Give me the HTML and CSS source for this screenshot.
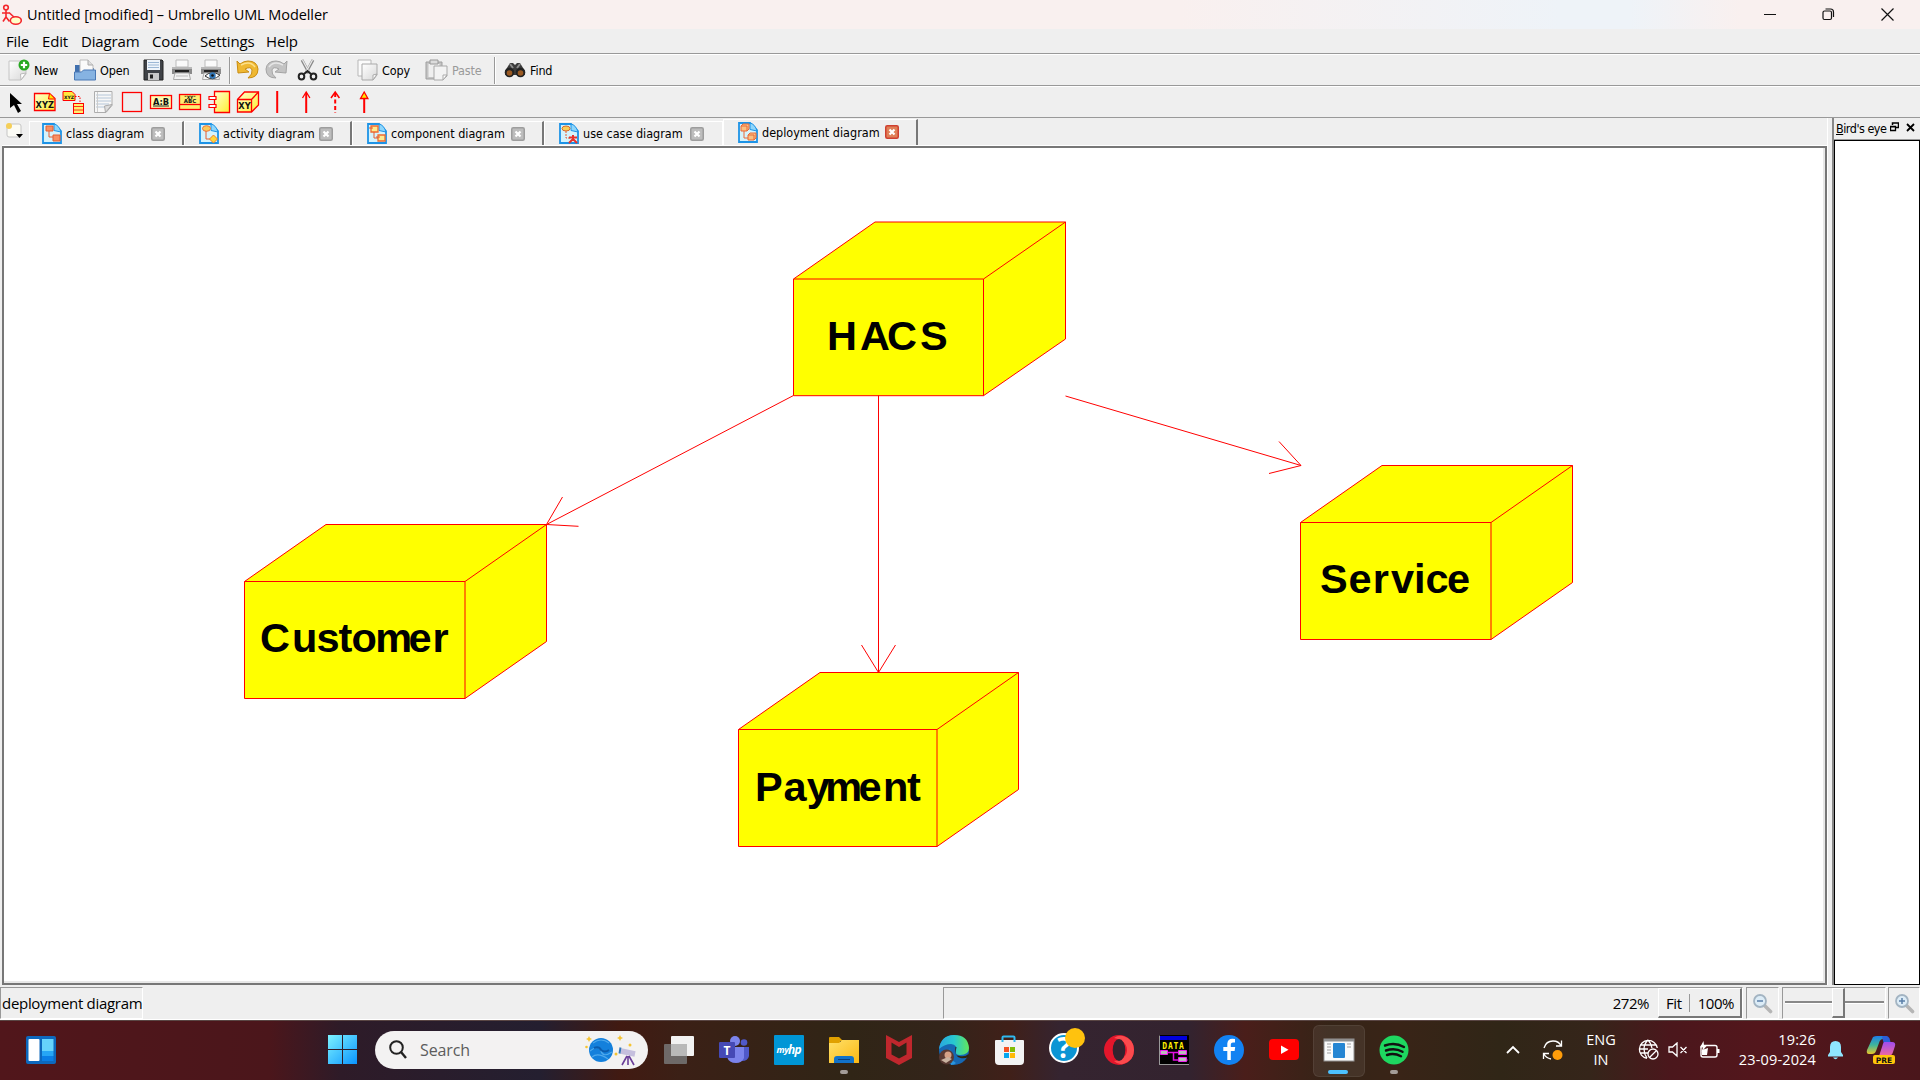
FILE: index.html
```
<!DOCTYPE html>
<html lang="en">
<head>
<meta charset="utf-8">
<title>Umbrello UML Modeller</title>
<link rel="stylesheet" href="styles.css">
</head>
<body>
<svg width="0" height="0" class="defs">
  <defs>
    <linearGradient id="paper" x1="0" y1="0" x2="1" y2="1"><stop offset="0" stop-color="#fff"/><stop offset="1" stop-color="#d8d8d8"/></linearGradient>
    <linearGradient id="yel" x1="0" y1="0" x2="1" y2="1"><stop offset="0" stop-color="#ffffd0"/><stop offset="1" stop-color="#ffee30"/></linearGradient>
    <linearGradient id="win" x1="0" y1="0" x2="1" y2="1"><stop offset="0" stop-color="#7df3ff"/><stop offset="1" stop-color="#0a94ff"/></linearGradient>
    <linearGradient id="fold" x1="0" y1="0" x2="1" y2="1"><stop offset="0" stop-color="#ffe069"/><stop offset="1" stop-color="#fbb813"/></linearGradient>
    <linearGradient id="edge" x1="0" y1="0" x2="1" y2="0"><stop offset="0" stop-color="#2aa6e0"/><stop offset=".5" stop-color="#28c8d0"/><stop offset="1" stop-color="#62e85a"/></linearGradient>
    <linearGradient id="cop" x1="0" y1="0" x2="0" y2="1"><stop offset="0" stop-color="#1e7fe8"/><stop offset=".5" stop-color="#3fb59a"/><stop offset="1" stop-color="#e8c62a"/></linearGradient>
    <linearGradient id="cop2" x1="0" y1="0" x2="0" y2="1"><stop offset="0" stop-color="#a04cf0"/><stop offset="1" stop-color="#f06a9c"/></linearGradient>
    <symbol id="doc" viewBox="0 0 20 21"><path d="M1 1h11l7 7v12H1z" fill="#d5f3fc" stroke="#1d93e6" stroke-width="1.800"/><path d="M12 1q5 1 7 8l-7-1.500z" fill="#8fd6fb" stroke="#1d93e6" stroke-width="1"/></symbol>
    <symbol id="close" viewBox="0 0 14 14"><rect x=".75" y=".75" width="12.500" height="12.500" rx="1.500" fill="#bdbdbd" stroke="#9d9d9d" stroke-width="1.500"/><path d="M4.500 4.500l5 5M9.500 4.500l-5 5" stroke="#fff" stroke-width="2.200"/></symbol>
    <symbol id="closered" viewBox="0 0 14 14"><rect x=".75" y=".75" width="12.500" height="12.500" rx="1.500" fill="#e08058" stroke="#cf4030" stroke-width="1.500"/><path d="M4.500 4.500l5 5M9.500 4.500l-5 5" stroke="#fff" stroke-width="2.200"/></symbol>
    <symbol id="printer" viewBox="0 0 22 22"><path d="M5 1h12v7H5z" fill="#fafafa" stroke="#bbb"/><path d="M1 8h20v7H1z" fill="#8b8b8b"/><path d="M1 8h20v2H1z" fill="#b8b8b8"/><path d="M4 11h14v2.500H4z" fill="#222"/><path d="M4 14h14l1.500 6.500h-17z" fill="#f2f2f2" stroke="#aaa"/><path d="M5 17h12" stroke="#bbb"/></symbol>
    <symbol id="glass" viewBox="0 0 21 21"><path d="M12 12l6.500 6.500" stroke="#b5b5b5" stroke-width="3.600" stroke-linecap="round"/><circle cx="8" cy="8" r="6" fill="#dcecf7" stroke="#a3b4c2" stroke-width="1.800"/></symbol>
  </defs>
</svg>

<div class="screen">
  <header class="titlebar">
    <svg class="appicon" width="20" height="21" viewBox="0 0 20 21" fill="none" stroke="#f4262c" stroke-width="1.600"><circle cx="4" cy="3.500" r="2.300"/><path d="M4 6v7M0 9h8M4 13l-3 4.500M4 13l3.500 4.500M7 8.500l6 5.500"/><ellipse cx="13.800" cy="16.500" rx="5.500" ry="3.700" fill="#ffffc8"/></svg>
    <span class="title">Untitled [modified] – Umbrello UML Modeller</span>
    <div class="winbtns">
      <svg width="12" height="12"><path d="M0 6.500h12" stroke="#111"/></svg>
      <svg width="13" height="13" fill="none" stroke="#111" stroke-width="1.200"><rect x="1" y="3" width="8.500" height="8.500" rx="1.500"/><path d="M3.500 1h5q3 0 3 3v5"/></svg>
      <svg width="13" height="13"><path d="M.5.5l12 12M12.500.5l-12 12" stroke="#111" stroke-width="1.200"/></svg>
    </div>
  </header>

  <nav class="menubar"><span class="m1">File</span><span class="m2">Edit</span><span class="m3">Diagram</span><span class="m4">Code</span><span class="m5">Settings</span><span class="m6">Help</span></nav>

  <div class="toolbar main-tools">
    <div class="tool t-new"><svg width="22" height="22"><path d="M1 2h17v13l-5 6H1z" fill="url(#paper)" stroke="#c4c4c4"/><path d="M18 14l-5 7-.5-6z" fill="#fff" stroke="#bbb"/><circle cx="16" cy="6" r="5.500" fill="#27a821"/><path d="M16 2.800v6.400M12.800 6h6.400" stroke="#fff" stroke-width="2.200"/></svg><span>New</span></div>
    <div class="tool t-open"><svg width="22" height="22"><path d="M1 6h8l2 3h9v11H1z" fill="#3f6fae"/><path d="M6 1h8l5 5v9H6z" fill="#fafafa" stroke="#bbb"/><path d="M14 1v5h5" fill="#ddd" stroke="#aaa"/><path d="M.5 21V13h7l2-2h12v10z" fill="#86b3e2" stroke="#4a79b5"/></svg><span>Open</span></div>
    <div class="tool t-save"><svg width="21" height="22"><path d="M1 1h18l1 1v19H1z" fill="#3f4247" stroke="#222"/><path d="M4 1h13v10H4z" fill="#eef4fb"/><path d="M5 3.500h11M5 6h11M5 8.500h11" stroke="#9bb7d6"/><path d="M5 14h11v7H5z" fill="#c9c9c9"/><path d="M7 15.500h3v4H7z" fill="#222"/></svg></div>
    <div class="tool t-print"><svg width="22" height="22"><use href="#printer"/></svg></div>
    <div class="tool t-preview"><svg width="22" height="22"><use href="#printer"/><path d="M5 17q6-6 15-1q-7 7-15 1z" fill="#fff" stroke="#333"/><circle cx="12.500" cy="16.500" r="3.200" fill="#3278b8"/><circle cx="12.500" cy="16.500" r="1.300" fill="#111"/></svg></div>
    <i class="sep"></i>
    <div class="tool t-undo"><svg width="23" height="20"><path d="M1 1l1 12 11-1-4-3q6-3 7 1 1 4-4 8 10 0 10-9-1-8-10-8-4 0-8 3z" fill="#efb832" stroke="#c98d12"/><path d="M5 5q9-5 14 2" fill="none" stroke="#fde08a" stroke-width="1.500"/></svg></div>
    <div class="tool t-redo"><svg width="23" height="20"><path d="M22 1l-1 12-11-1 4-3q-6-3-7 1-1 4 4 8-10 0-10-9 1-8 10-8 4 0 8 3z" fill="#c3c3c3" stroke="#a4a4a4"/><path d="M18 5q-9-5-14 2" fill="none" stroke="#e6e6e6" stroke-width="1.500"/></svg></div>
    <div class="tool t-cut"><svg width="21" height="22"><path d="M5 1l7 13M16 1L9 14" stroke="#888" stroke-width="2.800"/><path d="M5.500 1l6.500 12M15.500 1l-6.500 12" stroke="#e8e8e8" stroke-width="1.300"/><path d="M7 15l3.500-3 3.500 3" fill="none" stroke="#222" stroke-width="2"/><ellipse cx="4.500" cy="17.500" rx="2.800" ry="3" fill="none" stroke="#222" stroke-width="2"/><ellipse cx="16.500" cy="17.500" rx="2.800" ry="3" fill="none" stroke="#222" stroke-width="2"/></svg><span>Cut</span></div>
    <div class="tool t-copy"><svg width="21" height="22"><path d="M1 1h13v16H1z" fill="#fbfbfb" stroke="#b7b7b7"/><path d="M5 5h15v11l-4 5H5z" fill="url(#paper)" stroke="#a9a9a9"/><path d="M20 15l-4 6v-5z" fill="#fff" stroke="#aaa"/></svg><span>Copy</span></div>
    <div class="tool t-paste off"><svg width="23" height="22"><path d="M1 3h16v17H1z" fill="#c4c4c4" stroke="#9f9f9f"/><path d="M3.500 5h11v13h-11z" fill="#efefef"/><path d="M5 1h8v4H5z" fill="#ddd" stroke="#999"/><path d="M9 7h13v10l-4 4H9z" fill="#f3f3f3" stroke="#a9a9a9"/><path d="M22 16l-4 5v-5z" fill="#fff" stroke="#aaa"/></svg><span>Paste</span></div>
    <i class="sep"></i>
    <div class="tool t-find"><svg width="22" height="16"><path d="M1 9l5-8h3l2 2 2-2h3l5 8v4H1z" fill="#3c3c3c"/><path d="M6 2l3 4M16 2l-3 4" stroke="#8c8c8c" stroke-width="2"/><circle cx="5.500" cy="10.500" r="4.800" fill="#222"/><circle cx="16.500" cy="10.500" r="4.800" fill="#222"/><circle cx="5.500" cy="11" r="2.800" fill="#9b5a22"/><circle cx="16.500" cy="11" r="2.800" fill="#9b5a22"/></svg><span>Find</span></div>
  </div>

  <div class="toolbar work-tools">
    <svg width="29" height="24"><path d="M9 3v15l4-3 4 8 3-2-4-7h5z" fill="#000"/></svg>
    <svg width="29" height="24"><path d="M4.500 3.500h15l5.500 5v12h-20.500z" fill="url(#yel)" stroke="#f00" stroke-width="1.300"/><path d="M19.500 3.500l-1 5.500h6" fill="#ffe600" stroke="#f00"/><text x="14.800" y="18" class="ico b8">XYZ</text></svg>
    <svg width="29" height="24"><path d="M4 1.500h9l3 3v6H4z" fill="#ffe83c" stroke="#f00"/><text x="10" y="9" class="ico b5">XYZ</text><path d="M16 6.500h5v7" fill="none" stroke="#f00" stroke-dasharray="1.500 1.500"/><rect x="14.500" y="13.500" width="10" height="10" fill="#ffef70" stroke="#f00"/><path d="M14 16.500h11M15 20h9" stroke="#f00" stroke-width=".8"/></svg>
    <svg width="29" height="24"><path d="M6.500 1.500h17.500v14l-6 7H6.500z" fill="#f7f7f7" stroke="#adadad"/><path d="M8 5h15M8 8h15M8 11h15M8 14h13M8 17h10" stroke="#b5c6d8"/><path d="M9.500 2v20" stroke="#ccc"/><path d="M24 14.500l-6.500 8-1-6.500z" fill="#ddd" stroke="#aaa"/></svg>
    <svg width="29" height="24"><rect x="5.500" y="2.500" width="19" height="19" fill="none" stroke="#f00" stroke-width="1.300"/></svg>
    <svg width="29" height="24"><rect x="4.500" y="5.500" width="21" height="13" fill="#fffbb0" stroke="#f00" stroke-width="1.300"/><text x="15" y="14.500" class="ico b8">A:B</text><path d="M7 16h16" stroke="#222"/></svg>
    <svg width="29" height="24"><rect x="4.500" y="4.500" width="21" height="15" fill="#ffee70" stroke="#f00" stroke-width="1.300"/><path d="M4 14.500h22" stroke="#f00" stroke-width="1.300"/><text x="15" y="8.500" class="ico b5">"XY"</text><text x="15" y="13.200" class="ico b6">ABC</text></svg>
    <svg width="29" height="24"><path d="M10.500 1.500h15v21h-15z" fill="url(#yel)" stroke="#f00" stroke-width="1.300"/><path d="M5 6.500h7v3h-7zM5 14.500h7v3h-7z" fill="#fff" stroke="#f00" stroke-width="1.200"/></svg>
    <svg width="29" height="24"><path d="M4.500 9.500l7-7.500h14v13l-7 7h-14z" fill="url(#yel)" stroke="#f00" stroke-width="1.300"/><path d="M4.500 9.500h14v12.500M18.500 9.500l7-7.500" fill="none" stroke="#f00" stroke-width="1.300"/><text x="11.500" y="19" class="ico b8">XY</text></svg>
    <svg width="29" height="24"><path d="M15.200 1v22" stroke="#f00" stroke-width="2"/></svg>
    <svg width="29" height="24" fill="none" stroke="#f00"><path d="M15.200 3v20" stroke-width="2"/><path d="M11.500 8l3.700-6 3.700 6" stroke-width="1.300"/></svg>
    <svg width="29" height="24" fill="none" stroke="#f00"><path d="M15.200 3v20" stroke-width="2" stroke-dasharray="4 2.500"/><path d="M11 8l4.200-6 4.200 6" stroke-width="1.500"/></svg>
    <svg width="29" height="24" stroke="#f00"><path d="M15.200 8v15" stroke-width="2"/><path d="M11.500 8.500l3.700-6.500 3.700 6.500z" fill="#ffe800" stroke-width="1.300"/></svg>
  </div>

  <main class="work">
    <section class="pane">
      <div class="tabs">
        <svg class="corner" width="20" height="20"><rect x="2" y="2" width="14" height="13" rx="2" fill="#fbfbf5" stroke="#c5c5c5"/><circle cx="4" cy="4" r="3" fill="#f5cf58"/><path d="M11 12h7l-3.500 4z" fill="#000"/></svg>
        <div class="tab tab-class"><svg width="20" height="21"><use href="#doc"/><path d="M4 3h7v5H4zM11 12h7v6h-7z" fill="#f79064" stroke="#e55c30"/><path d="M7 8v6h4" fill="none" stroke="#e55c30"/></svg><span>class diagram</span><svg width="14" height="14"><use href="#close"/></svg></div>
        <div class="tab tab-act"><svg width="20" height="21"><use href="#doc"/><ellipse cx="7.500" cy="5.500" rx="4" ry="2.800" fill="#f9c95a" stroke="#ef7438"/><path d="M7 8v8h4" fill="none" stroke="#e55c30"/><path d="M14.500 12l4 4-4 4-4-4z" fill="#ffd738" stroke="#f07e28"/></svg><span>activity diagram</span><svg width="14" height="14"><use href="#close"/></svg></div>
        <div class="tab tab-comp"><svg width="20" height="21"><use href="#doc"/><path d="M4 3h7v6H4zM11 12h7v6h-7z" fill="#fdeb90" stroke="#f06a30" stroke-width="1.300"/><path d="M2 5h4M9 14h4M7 9v6h4" fill="none" stroke="#e55c30"/></svg><span>component diagram</span><svg width="14" height="14"><use href="#close"/></svg></div>
        <div class="tab tab-use"><svg width="20" height="21"><use href="#doc"/><ellipse cx="7" cy="5.500" rx="4" ry="2.500" fill="#f8cf58" stroke="#d96a2c"/><path d="M7 8v7h4" fill="none" stroke="#e55c30" stroke-dasharray="2 1"/><path d="M14 12v4M10 14.500h8M14 16l-4 4M14 16l4 4" stroke="#e8322c" stroke-width="2"/></svg><span>use case diagram</span><svg width="14" height="14"><use href="#close"/></svg></div>
        <div class="tab tab-dep active"><svg width="20" height="21"><use href="#doc"/><path d="M3 4l2-2h6v5l-2 2H3zM10 13l2-2h6v5l-2 2h-6z" fill="#fbc080" stroke="#ea6838"/><path d="M6 9v7h4M3 4h6v5M10 13h6v5" fill="none" stroke="#ea6838"/></svg><span>deployment diagram</span><svg width="14" height="14"><use href="#closered"/></svg></div>
      </div>
      <div class="canvas">
        <svg class="diagram" width="1819" height="833" viewBox="4 148 1819 833">
          <g class="node">
            <path d="M793.500 279L875 222h190.500v117L983.500 395.700h-190z"/><path d="M793.500 279h190v116.700M983.500 279l82-57"/>
            <path d="M244.500 581.500l81.500-57h220.500v117L465 698.500H244.500z"/><path d="M244.500 581.500H465v117M465 581.500l81.500-57"/>
            <path d="M738.500 729.500l81.500-57h198.500v117L937 846.500H738.500z"/><path d="M738.500 729.500H937v117M937 729.500l81.500-57"/>
            <path d="M1300.500 522.500l81.500-57h190.500v117L1491 639.500h-190.500z"/><path d="M1300.500 522.500H1491v117M1491 522.500l81.500-57"/>
          </g>
          <g class="link">
            <path d="M793.500 395.500L546.500 524.500M562.500 497l-16 27.500 32 1.800"/>
            <path d="M878.500 395.500v277M861.500 645l17 27.500 17-27.500"/>
            <path d="M1065.500 396l235.500 69.500M1279 441.500l22 24-32 8"/>
          </g>
          <g class="label">
            <text y="350" x="827 860 887 920">HACS</text>
            <text y="652" x="260 292 316.500 338.500 351.500 375.300 408.600 432.500">Customer</text>
            <text y="801" x="755 783.500 806.700 825.300 858.500 883 907">Payment</text>
            <text y="593" x="1320 1348.500 1372.800 1391 1414 1425.500 1447">Service</text>
          </g>
        </svg>
      </div>
    </section>
    <aside class="dock">
      <div class="dock-head"><span class="dock-title"><u>B</u>ird's eye</span>
        <svg width="9" height="10" fill="none" stroke="#000"><path d="M2.500 3V1h6v4.500H6" stroke-width="1.500"/><path d="M.5 4.500h5v4h-5zM0 4.800h6" stroke-width="1.300"/></svg>
        <svg width="9" height="9"><path d="M1 1l7 7M8 1l-7 7" stroke="#000" stroke-width="1.800"/></svg></div>
      <div class="bird"></div>
    </aside>
  </main>

  <footer class="status">
    <div class="st-name">deployment diagram</div>
    <div class="st-zoom"><span class="pct">272%</span><div class="fitbox"><span class="fit">Fit</span><i></i><span>100%</span></div></div>
    <div class="cell out"><svg width="21" height="21"><use href="#glass"/><path d="M5 8h6" stroke="#5b7fa8" stroke-width="1.500"/></svg></div>
    <div class="cell slider"><div class="groove"></div><div class="knob"></div></div>
    <div class="cell in"><svg width="21" height="21"><use href="#glass"/><path d="M5 8h6M8 5v6" stroke="#5b7fa8" stroke-width="1.500"/></svg></div>
  </footer>

  <div class="taskbar">
    <svg class="widgets" width="30" height="28"><rect width="30" height="28" rx="2" fill="#0d68bd"/><rect x="2.500" y="3" width="11" height="22" rx="1" fill="#fff"/><rect x="16" y="3" width="11.500" height="12" fill="#66d3fb"/><rect x="16" y="15" width="11.500" height="5" fill="#26a6f5"/><rect x="16" y="20" width="11.500" height="5" fill="#0a7ee5"/></svg>
    <svg class="start" width="29" height="29"><path d="M0 0h14v14H0zM15 0h14v14H15zM0 15h14v14H0zM15 15h14v14H15z" fill="url(#win)"/></svg>
    <div class="search">
      <svg width="18" height="20" fill="none" stroke="#222" stroke-width="2"><circle cx="7.500" cy="7.500" r="6.300"/><path d="M12 12l5 6" stroke-width="2.400"/></svg>
      <span>Search</span>
      <svg class="space" width="54" height="32"><path d="M5 2l1 2 2 1-2 1-1 2-1-2-2-1 2-1zM36 1l1 2 2 1-2 1-1 2-1-2-2-1 2-1z" fill="#f5c431"/><circle cx="2.500" cy="13" r="1.300" fill="#f5c431"/><circle cx="46" cy="11" r="1.500" fill="#f5c431"/><circle cx="32" cy="20" r="1.500" fill="#f5c431"/><circle cx="17" cy="16" r="12" fill="#1480dc"/><path d="M9 9q8-6 16 0M6 17q9-7 11 0t11 1M8 23q6-5 16 2" fill="none" stroke="#4fa9ec" stroke-width="1.200"/><path d="M10 14q5-2 7 2 4 3 8 0" fill="none" stroke="#0b5cae" stroke-width="2"/><path d="M37 17l14 3" stroke="#c5bfdd" stroke-width="5.500"/><path d="M36.500 13.500l-1 6" stroke="#3275b8" stroke-width="2"/><path d="M44 22v9M43 22l-5 9M45 22l5 9" stroke="#6b3f99" stroke-width="1.600"/></svg>
    </div>
    <div class="apps">
      <div class="app"><svg width="32" height="32"><rect x="8" y="2" width="23" height="20" rx="1" fill="#f2f2f2"/><rect x="1" y="10" width="23" height="20" rx="1" fill="#777" opacity=".85"/><path d="M8 10h16v12H8z" fill="#b9b9b9"/></svg></div>
      <div class="app"><svg width="32" height="32"><circle cx="17" cy="7" r="5" fill="#7b83eb"/><circle cx="26" cy="8.500" r="3.300" fill="#5059c9"/><path d="M20 13h11v9q-1 5-7 5z" fill="#5059c9"/><path d="M9 13h17v11q-2 5-8 5-7 0-9-6z" fill="#7b83eb"/><rect x="1" y="8" width="16" height="16" rx="1" fill="#4549b5"/><text x="9" y="20.500" class="logo" font-size="12">T</text></svg></div>
      <div class="app"><svg width="32" height="32"><rect x="1" y="1" width="30" height="30" rx="1" fill="#0096d6"/><text x="9.500" y="19" class="logo it my">my</text><text x="21.500" y="20" class="logo it hp">hp</text></svg></div>
      <div class="app"><svg width="32" height="32"><path d="M1 4q0-1 1-1h9l4 4h-3v5H1z" fill="#e0a000"/><path d="M1 9h10l3-3h17v23H1z" fill="url(#fold)"/><path d="M6 29v-4q0-3 3-3h14q3 0 3 3v4z" fill="#1272c8"/><path d="M10 25.500h12" stroke="#0b3f7c"/></svg><b class="dot"></b></div>
      <div class="app"><svg width="32" height="32"><path d="M3 1l13 7 13-7v23l-13 7-13-7z" fill="#c0272d"/><path d="M8.500 8.500v12l7.500 4 7.500-4V8.500L16 13z" fill="#2f2417"/></svg></div>
      <div class="app"><svg width="32" height="32"><circle cx="16" cy="16" r="15" fill="#1668b4"/><path d="M1 15Q3 1 16 1q14 0 15 13 0 7-9 7-5 0-4-4 2-6-5-7-6 0-12 5z" fill="url(#edge)"/><path d="M12 14q-3 10 6 15-2 2-5 2z" fill="#2a95dc"/><circle cx="8.500" cy="23" r="7.500" fill="#5a3a33"/><circle cx="10" cy="21" r="3.500" fill="#d5a187"/><path d="M3 26l5 3 6-4-4-2z" fill="#c9b2a0"/><path d="M18.500 13q-3 9 3 9 6 1 9-2v3q-4 2-8 1-7-2-5-11z" fill="#30240e"/></svg></div>
      <div class="app"><svg width="32" height="32"><path d="M9.500 9V3.500q0-1 1-1h10q1 0 1 1V9" fill="none" stroke="#2fb9f0" stroke-width="2"/><path d="M2 7q0-1 1-1h27q1 0 1 1v20q0 4-4 4H6q-4 0-4-4z" fill="#f3f3f3"/><path d="M9.500 8V6M21.500 8V6" stroke="#2fb9f0" stroke-width="2"/><path d="M11 13h5v5h-5z" fill="#f35325"/><path d="M17 13h5v5h-5z" fill="#81bc06"/><path d="M11 19h5v5h-5z" fill="#05a6f0"/><path d="M17 19h5v5h-5z" fill="#ffba08"/></svg></div>
      <div class="app"><svg width="40" height="40" class="help"><circle cx="18" cy="20" r="14" fill="#0c95d4" stroke="#fff" stroke-width="2"/><text x="18" y="30" class="logo" font-size="28">?</text><circle cx="29" cy="10" r="10" fill="#ffc20e"/></svg></div>
      <div class="app"><svg width="32" height="32"><ellipse cx="16" cy="16" rx="15" ry="15" fill="#e3162b"/><path d="M20 2q11 3 11 14T20 30q-5 1-9-3 13-2 13-11T11 4q4-3 9-2z" fill="#fb4a4d"/><ellipse cx="16" cy="16" rx="6.300" ry="11" fill="#33232f"/></svg></div>
      <div class="app"><svg width="32" height="32"><rect x="1" y="1" width="30" height="30" fill="#000"/><path d="M1.500 31V1.500M1 30.500h30" stroke="#999" fill="none"/><path d="M2 2h27v4H2z" fill="#00d"/><text x="15.500" y="14.500" class="data">DATA</text><path d="M10 18.500h18M15.500 18.500V26h14" fill="none" stroke="#e010e0" stroke-width="1.500"/><path d="M2.500 16.500h7v4h-7zM20.500 16.500h8v4h-8zM20.500 23.500h8v4h-8z" fill="#bbb" stroke="#f020f0"/></svg></div>
      <div class="app"><svg width="32" height="32"><circle cx="16" cy="16" r="15" fill="#1282f2"/><path d="M17.800 26v-9h3.800l.6-4h-4.400v-2.500q0-2 2.200-2h2V5q-7.200-1.500-7.700 4.500V13h-4v4h4v9z" fill="#fff"/></svg></div>
      <div class="app"><svg width="32" height="32"><rect x="1" y="5" width="30" height="21" rx="4" fill="#f00"/><path d="M13 11.500v8.500l7.500-4.200z" fill="#fff"/></svg></div>
      <div class="app current"><svg width="32" height="32"><rect x="1" y="5" width="30" height="22" fill="#fafafa" stroke="#8b8b8b"/><path d="M1 5h30v2.500H1z" fill="#888"/><path d="M4 10h4M4 13h4M4 16h4M4 19h4M24 10h4M24 13h4" stroke="#999"/><rect x="10" y="9" width="12" height="15" rx="1" fill="#157ccf"/></svg><b class="bar"></b></div>
      <div class="app"><svg width="32" height="32"><circle cx="16" cy="16" r="14.500" fill="#1ed760"/><path d="M7 11.500q10-3.500 19 1.500M8 16.500q9-3 16.500 1.300M9 21q7-2.500 14 1.300" fill="none" stroke="#111" stroke-width="2.400" stroke-linecap="round"/></svg><b class="dot"></b></div>
    </div>
    <div class="tray">
      <svg class="chev" width="14" height="9"><path d="M1 8l6-6 6 6" fill="none" stroke="#fff" stroke-width="1.800"/></svg>
      <svg class="sync" width="22" height="22" fill="none" stroke="#fff" stroke-width="1.300"><path d="M2 9q2-7 9-7 6 0 8 5M19.500 1.500V7H14M1.500 20v-5.500H7M2 15q2 4 7 5"/><circle cx="15.500" cy="16" r="5" fill="#ff9d0a" stroke="none"/></svg>
      <div class="lang"><span>ENG</span><span>IN</span></div>
      <svg class="globe" width="21" height="21" fill="none" stroke="#fff" stroke-width="1.300"><path d="M19.300 9A9 9 0 1 0 9 19.300M1 10h9M2 6h16.500M2 14h8M10 1q-4 4-4 9t3 9M10 1q3 3 4 8"/><circle cx="15" cy="15" r="5"/><path d="M11.500 18.500l7-7"/></svg>
      <svg class="snd" width="20" height="16" fill="none" stroke="#fff" stroke-width="1.300"><path d="M1 5h3.500L9 1v13L4.500 10H1zM12.500 5l6 6M18.500 5l-6 6"/></svg>
      <svg class="bat" width="21" height="18"><rect x="2" y="4.500" width="16" height="11.500" rx="2" fill="none" stroke="#fff" stroke-width="1.400"/><path d="M18 8h2.500v4H18z" fill="#fff"/><path d="M3 14V9l6-2-1 7z" fill="#fff"/><path d="M4.500 0L1 6.500h3L2.500 11 8 4.500H5z" fill="#fff"/></svg>
      <div class="clock"><span>19:26</span><span>23-09-2024</span></div>
      <svg class="bell" width="17" height="20"><path d="M1 15l2-3V7q0-6 5.500-6T14 7v5l2 3v1.500H1z" fill="#8fe6ff"/><path d="M6 17.500h5q-2.500 3.500-5 0z" fill="#8fe6ff"/></svg>
      <svg class="copilot" width="30" height="30"><path d="M7 2q2-1 4-1h8q3 0 3 3l-5 0q-3 0-4 4l-3 8q-1 3-4 3H3q-3 0-2-4z" fill="url(#cop)"/><path d="M17 1h3q3 0 4 4l1 4h-7l-2-7z" fill="#2b5fd8"/><path d="M18 7h8q4 0 3 4l-2 6q-1 4-5 4h-9l3-9q1-4 2-5z" fill="url(#cop2)"/><rect x="7" y="20" width="22" height="9" rx="2" fill="#ffc60a"/><text x="18" y="27.500" class="pre">PRE</text></svg>
    </div>
  </div>
</div>
</body>
</html>
```
FILE: styles.css
```
* { box-sizing: border-box; }
html, body { margin: 0; overflow: hidden; }
body { font-family: "Open Sans", "Noto Sans", sans-serif; color: #000; }
svg { display: block; flex: none; }
.defs { position: absolute; }
.screen { width: 1920px; height: 1080px; display: flex; flex-direction: column; background: #efefef; }
span { white-space: nowrap; }

.titlebar { height: 29px; display: flex; align-items: center; padding: 0 26px 1px 2px; background: linear-gradient(90deg, #f9f0ef 0, #f9f0ef 1180px, #eef3f8 1560px, #eef3f8 1630px, #f9f0ef 1740px); }
.title { margin-left: 5px; font-size: 14.500px; letter-spacing: -.08px; }
.winbtns { margin-left: auto; display: flex; align-items: center; gap: 46px; }

.menubar { height: 25px; display: flex; align-items: center; padding-left: 6px; font-size: 15px; border-bottom: 1px solid #999; }
.menubar span { letter-spacing: -.15px; }
.m1 { width: 36px; } .m2 { width: 39px; } .m3 { width: 71px; } .m4 { width: 48px; } .m5 { width: 66px; }

.toolbar { height: 32px; display: flex; align-items: center; border-top: 1px solid #fff; border-bottom: 1px solid #999; }
.tool, .tab, .dock-head { font: 12.500px "DejaVu Sans Condensed", "DejaVu Sans", sans-serif; }
.tool { display: flex; align-items: center; gap: 4px; letter-spacing: -.15px; flex: none; }
.main-tools { padding-left: 8px; }
.t-new { width: 66px; } .t-open { width: 69px; } .t-save { width: 28px; } .t-print { width: 29px; } .t-preview { width: 29px; }
.sep { width: 2px; height: 27px; border-left: 1px solid #999; border-right: 1px solid #fff; flex: none; }
.t-undo { margin-left: 5px; width: 29px; } .t-redo { width: 32px; } .t-cut { width: 60px; } .t-copy { width: 68px; } .t-paste { width: 69px; }
.off { color: #9a9a9a; }
.t-find { margin-left: 8px; }
.work-tools { padding-left: 1px; }
.ico { font-family: "DejaVu Sans", sans-serif; font-weight: bold; text-anchor: middle; fill: #111; }
.b8 { font-size: 8.300px; } .b6 { font-size: 5.500px; } .b5 { font-size: 4.500px; }

.work { flex: 1; min-height: 0; display: flex; }
.pane { width: 1828px; display: flex; flex-direction: column; border-right: 1px solid #fff; padding-left: 2px; }
.tabs { height: 28px; display: flex; align-items: flex-end; border-bottom: 1px solid #fff; }
.corner { margin: 0 4px 3px 3px; }
.tab { height: 24px; display: flex; align-items: center; padding-left: 12px; border-top: 1px solid #fff; border-left: 1px solid #fff; border-right: 2px solid #777; }
.tab span { margin-left: 4px; flex: 1; }
.tab-class { width: 155px; padding-right: 17px; }
.tab-act { width: 168px; padding-left: 14px; padding-right: 17px; }
.tab-comp { width: 192px; padding-left: 14px; padding-right: 17px; }
.tab-use { width: 179px; padding-left: 14px; padding-right: 18px; border-right: 1px solid #fff; }
.tab-dep { width: 195px; padding-left: 14px; padding-right: 17px; height: 26px; padding-bottom: 1px; }
.canvas { flex: 1; border: 2px solid #777; background: #fff; box-shadow: inset -2px -2px #e8e8e8; overflow: hidden; }
.node path { fill: #ff0; stroke: #f00; stroke-width: 1; }
.node path:nth-child(even) { fill: none; }
.link path { fill: none; stroke: #f00; stroke-width: 1; }
.label text { font: bold 41.500px "Liberation Sans", Arial, sans-serif; fill: #000; }
.dock { flex: 1; margin-left: 4px; border-left: 2px solid #888; display: flex; flex-direction: column; }
.dock-head { height: 22px; display: flex; align-items: center; padding: 0 5px 1px 2px; border-bottom: 1px solid #999; }
.dock-head svg { margin-top: -2px; }
.dock-head svg + svg { margin-left: 7px; }
.dock-title { width: 51px; letter-spacing: -.5px; margin-right: 3px; }
.bird { flex: 1; background: #fff; border: 1px solid #000; }

.status { height: 35px; display: flex; align-items: flex-start; padding-top: 2px; font-size: 15px; border-bottom: 1px solid #fff; }
.status > div { border: 1px solid #fff; border-top-color: #999; border-left-color: #999; height: 32px; display: flex; align-items: center; }
.st-name { width: 143px; padding-left: 1px; letter-spacing: -.3px; white-space: nowrap; }
.st-zoom { margin-left: auto; width: 800px; justify-content: flex-end; letter-spacing: -.45px; }
.fitbox { margin-left: 9px; width: 84px; height: 30px; display: flex; align-items: center; justify-content: space-between; padding: 0 6px 0 7px; border: 1px solid #fff; border-right: 2px solid #777; border-bottom: 2px solid #777; }
.fitbox i { width: 1px; height: 18px; background: #999; }
.cell { justify-content: center; margin-left: 3px; }
.out { width: 33px; } .slider { width: 104px; } .status .in { width: 32px; margin-left: 2px; }
.slider { position: relative; }
.groove { width: 99px; height: 3px; border-top: 2px solid #888; border-bottom: 1px solid #fff; margin-top: -2px; }
.knob { position: absolute; left: 49px; top: 0; width: 13px; height: 30px; background: #efefef; border: 1px solid #fff; border-right: 2px solid #777; border-bottom: 2px solid #777; }

.taskbar { height: 60px; display: flex; align-items: center; padding-bottom: 2px; color: #fff; border-top: 1px solid #5a4644; background: linear-gradient(90deg, #51161b 0, #4b161b 270px, #2e1b28 340px, #241f30 540px, #411a12 620px, #3b2016 680px, #302516 850px, #33241a 940px, #402019 1010px, #352430 1060px, #33232f 1190px, #4a1e1a 1245px, #352417 1330px, #392417 1400px, #302617 1500px, #35251a 1590px, #4b171c 1670px, #53161c 1760px, #4a161b 1920px); }
.widgets { margin-left: 26px; }
.start { margin-left: 272px; }
.search { margin-left: 18px; width: 273px; height: 38px; border-radius: 19px; background: #f3f2f2; display: flex; align-items: center; padding: 0 10px 0 14px; color: #5c5c5c; font-size: 16px; }
.search span { margin-left: 13px; letter-spacing: -.1px; }
.space { margin-left: auto; }
.apps { display: flex; margin-left: 3px; height: 60px; width: 770px; }
.app { width: 55.040px; height: 60px; position: relative; display: flex; align-items: center; justify-content: center; flex: none; }
.help { margin: -4px 0 0 4px; }
.current::before { content: ""; position: absolute; left: 2px; top: 5px; width: 50px; height: 50px; border-radius: 6px; background: #ffffff12; border: 1px solid #ffffff12; }
.dot { position: absolute; left: 24px; bottom: 6px; width: 8px; height: 4px; border-radius: 2px; background: #a39c98; }
.bar { position: absolute; left: 17px; bottom: 6px; width: 20px; height: 4px; border-radius: 2px; background: #4cc2ff; }
.logo { font-family: "Open Sans", sans-serif; font-weight: bold; fill: #fff; text-anchor: middle; }
.it { font-style: italic; }
.my { font-size: 9px; letter-spacing: -.5px; }
.hp { font-size: 12px; letter-spacing: -.8px; }
.data { font: bold 8px "DejaVu Sans Mono", monospace; fill: #fe0; text-anchor: middle; letter-spacing: .8px; }
.pre { font: bold 7.500px "DejaVu Sans", sans-serif; fill: #111; text-anchor: middle; }
.tray { margin-left: auto; display: flex; align-items: center; padding-right: 24px; font-size: 14.500px; line-height: 20px; }
.sync { margin-left: 22px; }
.lang { width: 40px; margin-left: 17px; display: flex; flex-direction: column; align-items: center; }
.globe { margin-left: 17px; }
.snd { margin-left: 9px; }
.bat { margin-left: 11px; }
.clock { width: 90px; margin-left: 6px; display: flex; flex-direction: column; align-items: flex-end; letter-spacing: .15px; }
.bell { margin-left: 11px; }
.copilot { margin-left: 22px; }
```
